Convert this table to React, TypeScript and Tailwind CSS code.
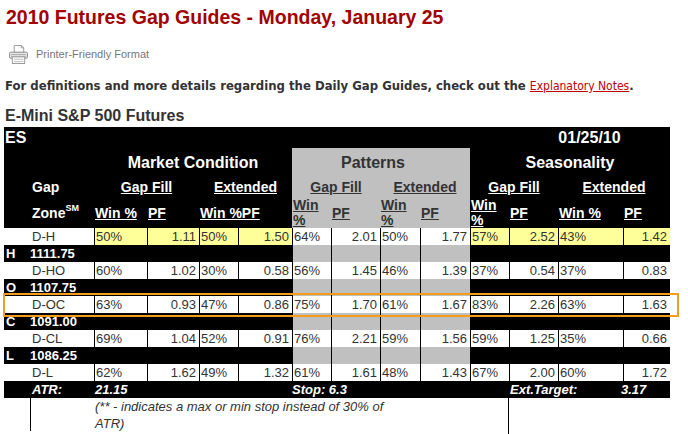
import React from 'react';

const GRID =
  'grid grid-cols-[26px_64px_53px_52px_39px_54px_39px_49px_40px_50px_39px_49px_65px_47px]';

interface GapRow {
  zone: string;
  hl?: boolean;
  values: string[];
  level?: [string, string];
}

const rows: GapRow[] = [
  {
    zone: 'D-H',
    hl: true,
    values: ['50%', '1.11', '50%', '1.50', '64%', '2.01', '50%', '1.77', '57%', '2.52', '43%', '1.42'],
    level: ['H', '1111.75'],
  },
  {
    zone: 'D-HO',
    values: ['60%', '1.02', '30%', '0.58', '56%', '1.45', '46%', '1.39', '37%', '0.54', '37%', '0.83'],
    level: ['O', '1107.75'],
  },
  {
    zone: 'D-OC',
    values: ['63%', '0.93', '47%', '0.86', '75%', '1.70', '61%', '1.67', '83%', '2.26', '63%', '1.63'],
    level: ['C', '1091.00'],
  },
  {
    zone: 'D-CL',
    values: ['69%', '1.04', '52%', '0.91', '76%', '2.21', '59%', '1.56', '59%', '1.25', '35%', '0.66'],
    level: ['L', '1086.25'],
  },
  {
    zone: 'D-L',
    values: ['62%', '1.62', '49%', '1.32', '61%', '1.61', '48%', '1.43', '67%', '2.00', '60%', '1.72'],
  },
];

const PrinterIcon = () => (
  <svg width="19" height="19" viewBox="0 0 20 20" className="mr-[8px]">
    <path d="M5.5 0.5h7.5l2.5 2.5v5h-10z" fill="#fff" stroke="#999" />
    <path d="M13 0.5v2.5h2.5" fill="none" stroke="#999" />
    <rect x="0.5" y="7.5" width="19" height="6.5" rx="1.5" fill="#e4e4e4" stroke="#8c8c8c" />
    <path d="M2 10h16M2 12h16" stroke="#b0b0b0" />
    <rect x="3.5" y="12.5" width="13" height="7" fill="#fff" stroke="#999" />
    <path d="M5 15h10M5 17.5h10" stroke="#bbb" />
  </svg>
);

function ValueCell({ value, index, hl }: { value: string; index: number; hl?: boolean }) {
  const yellow = hl && Math.floor(index / 4) !== 1;
  const right = index % 2 === 1;
  return (
    <div
      className={`h-[17px] flex items-center border-l border-black text-[13px] text-[#333] ${
        yellow ? 'bg-[#ffff99]' : 'bg-white'
      } ${right ? 'justify-end pr-[3px]' : 'pl-px'}`}
    >
      {value}
    </div>
  );
}

function HeadCell({ children, gray, span }: { children?: React.ReactNode; gray?: boolean; span?: boolean }) {
  return (
    <div
      className={`h-[30px] flex items-center pl-px text-[14px] font-bold leading-[15px] ${
        span ? 'col-span-2' : ''
      } ${gray ? 'bg-[#c0c0c0] text-[#333]' : 'text-white'}`}
    >
      {children}
    </div>
  );
}

export default function App() {
  return (
    <div className="relative w-[688px] h-[434px] bg-white overflow-hidden px-[4px] font-['Liberation_Sans',Arial,sans-serif]">
      <div className="h-[35px] flex items-center pl-[2px] text-[19.5px] font-bold text-[#a30000]">
        2010 Futures Gap Guides - Monday, January 25
      </div>

      <div className="h-[38px] flex items-center pl-[5px] text-[11px] text-[#777]">
        <PrinterIcon />
        Printer-Friendly Format
      </div>

      <div className="h-[26px] flex items-center pl-px text-[#333] font-['DejaVu_Sans_Condensed','DejaVu_Sans',sans-serif]">
        <span className="font-bold whitespace-pre text-[13px]">
          For definitions and more details regarding the Daily Gap Guides, check out the{' '}
        </span>
        <a href="#" className="text-[12px] text-[#c00000] underline">
          Explanatory Notes
        </a>
        <span className="font-bold text-[13px]">.</span>
      </div>

      <div className="h-[28px] pt-[6px] flex items-center pl-px text-[16px] font-bold text-[#333]">
        E-Mini S&amp;P 500 Futures
      </div>

      {/* Gap table */}
      <div className={`${GRID} w-[666px] bg-black`}>
        {/* title row */}
        <div className="col-span-11 h-[21px] flex items-center pl-[1px] text-[16px] font-bold text-white">ES</div>
        <div className="col-span-3 h-[21px] flex items-center justify-center text-[16px] font-bold text-white">
          01/25/10
        </div>

        {/* group row */}
        <div className="col-span-2 h-[29px]" />
        <div className="col-span-4 h-[29px] flex items-center justify-center text-[16px] font-bold text-white">
          Market Condition
        </div>
        <div className="col-span-4 h-[29px] flex items-center justify-center pr-[16px] bg-[#c0c0c0] text-[16px] font-bold text-[#333]">
          Patterns
        </div>
        <div className="col-span-4 h-[29px] flex items-center justify-center text-[16px] font-bold text-white">
          Seasonality
        </div>

        {/* sub group row */}
        <div className="col-span-2 h-[21px] flex items-center pl-[28px] text-[14px] font-bold text-white">Gap</div>
        <div className="col-span-2 h-[21px] flex items-center justify-center text-[14px] font-bold text-white underline">Gap Fill</div>
        <div className="col-span-2 h-[21px] flex items-center justify-center text-[14px] font-bold text-white underline">Extended</div>
        <div className="col-span-2 h-[21px] flex items-center justify-center bg-[#c0c0c0] text-[14px] font-bold text-[#333] underline">Gap Fill</div>
        <div className="col-span-2 h-[21px] flex items-center justify-center bg-[#c0c0c0] text-[14px] font-bold text-[#333] underline">Extended</div>
        <div className="col-span-2 h-[21px] flex items-center justify-center text-[14px] font-bold text-white underline">Gap Fill</div>
        <div className="col-span-2 h-[21px] flex items-center justify-center text-[14px] font-bold text-white underline">Extended</div>

        {/* column row */}
        <div className="col-span-2 h-[30px] flex items-center pl-[28px] text-[14px] font-bold text-white">
          Zone<sup className="text-[9px] -top-[5px]">SM</sup>
        </div>
        <HeadCell><span className="underline">Win %</span></HeadCell>
        <HeadCell><span className="underline">PF</span></HeadCell>
        <HeadCell span><span className="underline whitespace-pre">Win %PF</span></HeadCell>
        <HeadCell gray><span className="underline">Win %</span></HeadCell>
        <HeadCell gray><span className="underline">PF</span></HeadCell>
        <HeadCell gray><span className="underline">Win %</span></HeadCell>
        <HeadCell gray><span className="underline">PF</span></HeadCell>
        <HeadCell><span className="underline">Win %</span></HeadCell>
        <HeadCell><span className="underline">PF</span></HeadCell>
        <HeadCell><span className="underline">Win %</span></HeadCell>
        <HeadCell><span className="underline">PF</span></HeadCell>

        {rows.map((row) => (
          <React.Fragment key={row.zone}>
            <div className="col-span-2 h-[17px] flex items-center pl-[28px] bg-white text-[13px] text-[#333]">
              {row.zone}
            </div>
            {row.values.map((v, i) => (
              <ValueCell key={i} value={v} index={i} hl={row.hl} />
            ))}
            {row.level && (
              <>
                <div className="col-span-6 h-[17px] flex items-center text-[13px] font-bold text-white">
                  <span className="w-[26px] pl-[2px]">{row.level[0]}</span>
                  <span>{row.level[1]}</span>
                </div>
                <div className="h-[17px] border-l border-black bg-[#c0c0c0]" />
                <div className="h-[17px] border-l border-black bg-[#c0c0c0]" />
                <div className="h-[17px] border-l border-black bg-[#c0c0c0]" />
                <div className="h-[17px] border-l border-black bg-[#c0c0c0]" />
                <div className="col-span-4 h-[17px]" />
              </>
            )}
          </React.Fragment>
        ))}

        {/* ATR row */}
        <div className="col-span-2 h-[17px] flex items-center pl-[28px] text-[13px] font-bold italic text-white">ATR:</div>
        <div className="col-span-4 h-[17px] flex items-center pl-px text-[13px] font-bold italic text-white">21.15</div>
        <div className="col-span-5 h-[17px] flex items-center text-[13px] font-bold italic text-white">Stop: 6.3</div>
        <div className="col-span-2 h-[17px] flex items-center pl-px text-[13px] font-bold italic text-white">Ext.Target:</div>
        <div className="h-[17px] flex items-center -ml-[2px] text-[13px] font-bold italic text-white">3.17</div>
      </div>

      {/* footnote */}
      <div className="flex">
        <div className="w-[26px]" />
        <div className="w-[478px] h-[33px] border-l border-black pl-[64px]">
          <p className="w-[305px] text-[13px] italic leading-[17px] text-[#333]">
            (** - indicates a max or min stop instead of 30% of ATR)
          </p>
        </div>
        <div className="h-[36px] border-l border-black" />
      </div>

      {/* highlighted row marker */}
      <div className="absolute left-[3px] top-[293px] w-[676px] h-[24px] border-2 border-[#f39c1f] pointer-events-none" />
    </div>
  );
}
